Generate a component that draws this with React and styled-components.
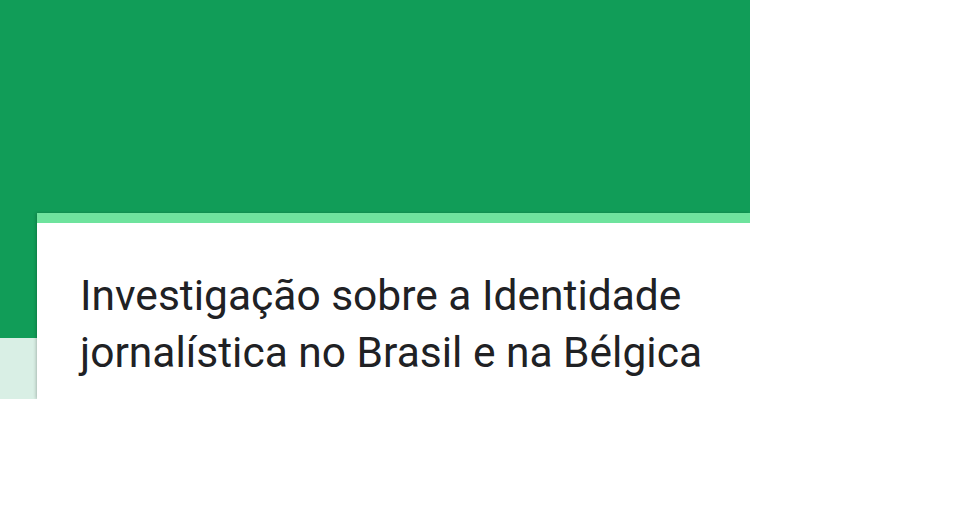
import React from 'react';
import styled, { createGlobalStyle } from 'styled-components';

const GlobalStyle = createGlobalStyle`
  html, body {
    margin: 0;
    padding: 0;
    background: #ffffff;
  }
`;

const FormPage = () => (
  <>
    <GlobalStyle />
    <StyledViewport>
      <StyledStage>
        <StyledCard>
          <StyledAccent />
          <StyledTitle>
            Investigação sobre a Identidade jornalística no Brasil e na Bélgica
          </StyledTitle>
        </StyledCard>
      </StyledStage>
    </StyledViewport>
  </>
);

export default FormPage;

const StyledViewport = styled.div`
  width: 750px;
  height: 399px;
  overflow: hidden;
`;

const StyledStage = styled.div`
  display: flex;
  height: 100%;
  box-sizing: border-box;
  padding: 213px 0 0 37px;
  background: linear-gradient(to bottom, #119d58 0, #119d58 338px, #d9efe5 338px);
`;

const StyledCard = styled.div`
  flex: 1;
  display: flex;
  flex-direction: column;
  background: #ffffff;
  box-shadow: -1px 0 3px rgba(0, 0, 0, 0.22);
`;

const StyledAccent = styled.div`
  height: 10px;
  background: #6ee39d;
`;

const StyledTitle = styled.h1`
  margin: 0;
  padding: 44px 40px 0 43px;
  font-family: Roboto, 'Liberation Sans', sans-serif;
  font-size: 42.5px;
  font-weight: 400;
  line-height: 57px;
  color: #202124;
`;
